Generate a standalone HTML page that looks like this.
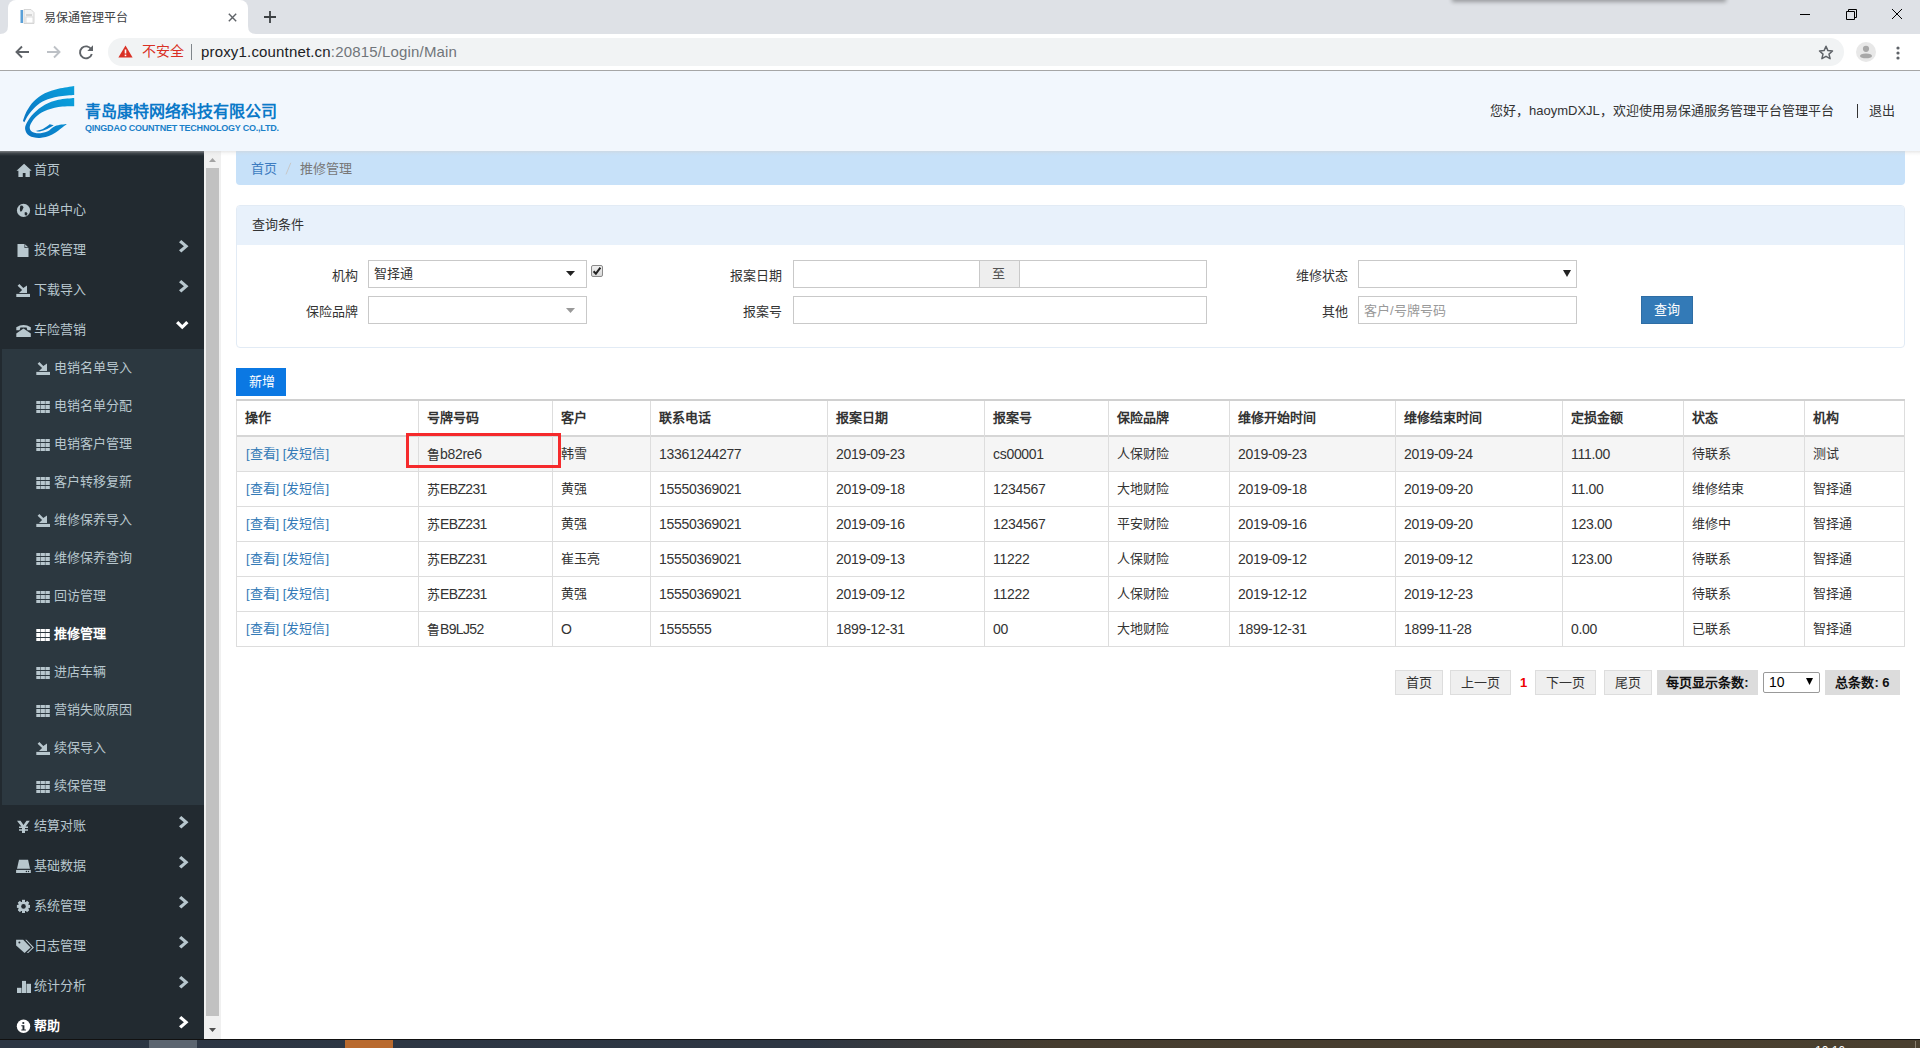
<!DOCTYPE html><html lang="zh-CN"><head><meta charset="utf-8"><title>易保通管理平台</title><style>
*{box-sizing:border-box;margin:0;padding:0}
html,body{width:1920px;height:1048px;overflow:hidden;background:#fff;font-family:"Liberation Sans",sans-serif;position:relative;color:#333}
.a{position:absolute;white-space:nowrap}
.t{position:absolute;white-space:nowrap;line-height:1}
svg{position:absolute;overflow:visible}
</style></head><body>
<div class="a" style="left:0px;top:0px;width:1920px;height:34px;background:#dee1e6"></div>
<div class="a" style="left:1453px;top:-10px;width:272px;height:10px;background:#888;box-shadow:0 1px 4px 1px rgba(0,0,0,0.32)"></div>
<div class="a" style="left:8px;top:0px;width:240px;height:34px;background:#fff;border-radius:8px 8px 0 0"></div>
<svg style="left:0;top:26px" width="8" height="8"><path d="M0 8 Q8 8 8 0 L8 8Z" fill="#fff"/></svg>
<svg style="left:248px;top:26px" width="8" height="8"><path d="M8 8 Q0 8 0 0 L0 8Z" fill="#fff"/></svg>
<svg style="left:20px;top:9px" width="16" height="16"><rect x="0.5" y="1" width="2.5" height="13" fill="#5aa0d8"/><path d="M4 0.5h7l3 3v11H4z" fill="#f4f4f4" stroke="#ccc" stroke-width="0.8"/><rect x="6" y="8" width="7" height="6" fill="#fff" stroke="#d6d6d6" stroke-width="0.8"/><line x1="6" y1="6" x2="12" y2="6" stroke="#aaa" stroke-width="0.8"/></svg>
<div class="t" style="left:44px;top:12px;font-size:12px;color:#3c4043;">易保通管理平台</div>
<svg style="left:228px;top:13px" width="9" height="9"><path d="M0.8 0.8L8.2 8.2M8.2 0.8L0.8 8.2" stroke="#5f6368" stroke-width="1.4"/></svg>
<svg style="left:264px;top:11px" width="12" height="12"><path d="M6 0v12M0 6h12" stroke="#3c4043" stroke-width="1.8"/></svg>
<div class="a" style="left:1800px;top:14px;width:10px;height:1px;background:#000"></div>
<svg style="left:1846px;top:9px" width="11" height="11"><path d="M0.5 2.5h8v8h-8z M2.5 2.5V0.5h8v8h-2" fill="none" stroke="#000" stroke-width="1"/></svg>
<svg style="left:1892px;top:9px" width="10" height="10"><path d="M0 0L10 10M10 0L0 10" stroke="#000" stroke-width="1"/></svg>
<div class="a" style="left:0px;top:34px;width:1920px;height:36px;background:#fff"></div>
<div class="a" style="left:0px;top:70px;width:1920px;height:1px;background:#a6a6a6"></div>
<svg style="left:15px;top:45px" width="14" height="14"><path d="M14 7H2M7 1.5L1.5 7 7 12.5" fill="none" stroke="#5f6368" stroke-width="1.9"/></svg>
<svg style="left:47px;top:45px" width="14" height="14"><path d="M0 7h12M7 1.5L12.5 7 7 12.5" fill="none" stroke="#bdc1c6" stroke-width="1.9"/></svg>
<svg style="left:79px;top:45px" width="14" height="14"><path d="M12.3 4.5A6 6 0 1 0 12.8 9" fill="none" stroke="#5f6368" stroke-width="1.9"/><path d="M14 0.3V6H8.3z" fill="#5f6368"/></svg>
<div class="a" style="left:108px;top:38px;width:1736px;height:28px;background:#f1f3f4;border-radius:14px"></div>
<svg style="left:118px;top:45px" width="15" height="13"><path d="M7.5 0.5L14.6 12.6H0.4z" fill="#d93025"/><rect x="6.7" y="4.5" width="1.6" height="4" fill="#fff"/><rect x="6.7" y="9.6" width="1.6" height="1.6" fill="#fff"/></svg>
<div class="t" style="left:142px;top:44px;font-size:14px;color:#d93025;">不安全</div>
<div class="a" style="left:191px;top:44px;width:1px;height:16px;background:#80868b"></div>
<div class="t" style="left:201px;top:44px;font-size:15px;color:#202124;letter-spacing:0.17px">proxy1.countnet.cn<span style="color:#70757a">:20815/Login/Main</span></div>
<svg style="left:1818px;top:45px" width="16" height="15"><path d="M8 1.3l1.9 4.3 4.6 0.4-3.5 3.1 1.1 4.6L8 11.3l-4.1 2.4 1.1-4.6L1.5 6l4.6-0.4z" fill="none" stroke="#5f6368" stroke-width="1.5" stroke-linejoin="round"/></svg>
<svg style="left:1856px;top:42px" width="20" height="20"><circle cx="10" cy="10" r="10" fill="#e8e8e8"/><circle cx="10" cy="6.8" r="3.1" fill="#a8a8a8"/><path d="M4 14.2Q4 11.5 10 11.5T16 14.2Q15 16.2 10 16.2T4 14.2z" fill="#a8a8a8"/></svg>
<svg style="left:1896px;top:45.6px" width="4" height="4"><circle cx="2" cy="2" r="1.6" fill="#5f6368"/></svg>
<svg style="left:1896px;top:50.6px" width="4" height="4"><circle cx="2" cy="2" r="1.6" fill="#5f6368"/></svg>
<svg style="left:1896px;top:55.6px" width="4" height="4"><circle cx="2" cy="2" r="1.6" fill="#5f6368"/></svg>
<div class="a" style="left:0px;top:71px;width:1920px;height:80px;background:#f2f7fd"></div>
<svg style="left:15px;top:80px" width="70" height="65" viewBox="15 80 70 65">
<defs><linearGradient id="lg" x1="0" y1="1" x2="1" y2="0"><stop offset="0" stop-color="#0a74c2"/><stop offset="1" stop-color="#0aa0dc"/></linearGradient></defs>
<path d="M74.2 85.9C71.6 86.4 63.3 87.5 58.4 88.7C53.5 89.9 48.9 91.2 44.8 93.3C40.7 95.4 36.6 98.5 33.6 101.4C30.6 104.4 28.6 107.8 26.8 111.0C25.0 114.2 23.6 119.2 23.0 120.9L24.3 122.2C25.0 121.0 26.7 117.3 28.6 114.7C30.5 112.1 32.8 109.1 35.5 106.7C38.2 104.3 41.0 102.2 44.8 100.5C48.6 98.8 53.5 97.3 58.4 96.4C63.3 95.5 71.6 95.2 74.2 94.9Z" fill="url(#lg)"/>
<path d="M74.2 98.0C71.6 98.3 63.3 98.7 58.4 99.8C53.5 100.9 48.9 102.5 44.8 104.8C40.7 107.1 36.6 110.5 33.6 113.5C30.6 116.5 28.2 120.1 26.8 122.8C25.4 125.5 24.8 127.4 25.2 129.6C25.6 131.8 26.9 134.4 29.3 135.8C31.7 137.2 36.0 138.2 39.8 138.0C43.6 137.8 47.7 136.9 52.2 134.6C56.7 132.3 64.4 125.8 66.8 124.0L66.8 124.0C64.9 124.3 58.6 124.7 55.3 125.9C52.0 127.2 50.0 130.3 47.2 131.5C44.4 132.7 41.2 133.3 38.6 133.3C36.0 133.3 33.1 132.7 31.7 131.5C30.2 130.3 29.3 128.3 29.9 125.9C30.5 123.5 33.0 119.7 35.5 117.2C38.0 114.7 41.0 112.7 44.8 111.0C48.6 109.3 53.5 107.8 58.4 107.0C63.3 106.2 71.6 106.4 74.2 106.3Z" fill="url(#lg)"/>
<path d="M35.5 131.1C36.7 130.8 40.5 130.1 42.9 129.0C45.3 127.9 48.6 125.1 49.7 124.3L53.7 125.3L53.7 125.3C52.6 125.9 49.5 128.0 47.2 129.0C44.9 130.0 41.8 131.2 39.8 131.5C37.8 131.8 36.2 131.2 35.5 131.1Z" fill="#0a7fc8"/>
</svg>
<div class="t" style="left:85px;top:104px;font-size:16px;color:#0b79c8;font-weight:bold">青岛康特网络科技有限公司</div>
<div class="t" style="left:85px;top:124px;font-size:9px;color:#1a80c8;font-weight:bold;letter-spacing:-0.22px">QINGDAO COUNTNET TECHNOLOGY CO.,LTD.</div>
<div class="t" style="left:1490px;top:104px;font-size:13px;color:#333;">您好，haoymDXJL，欢迎使用易保通服务管理平台管理平台</div>
<div class="a" style="left:1857px;top:104px;width:1px;height:14px;background:#333"></div>
<div class="t" style="left:1869px;top:104px;font-size:13px;color:#333;">退出</div>
<div class="a" style="left:0px;top:151px;width:204px;height:888px;background:#222a30"></div>
<div class="a" style="left:2px;top:349px;width:202px;height:456px;background:#2c3840"></div>
<div class="a" style="left:204px;top:151px;width:17px;height:888px;background:#f0f0f0"></div>
<div class="a" style="left:206px;top:168px;width:13px;height:848px;background:#c1c1c1"></div>
<svg style="left:209px;top:158px" width="7" height="4"><path d="M0 4L3.5 0 7 4z" fill="#a3a3a3"/></svg>
<svg style="left:209px;top:1028px" width="7" height="4"><path d="M0 0L3.5 4 7 0z" fill="#505050"/></svg>
<svg style="left:0;top:0" width="1" height="1"><g transform="translate(0,0)"><path d="M16.5 170.7L24.1 163.8 31.7 170.7H29.8V177H25.5V173H22.8V177H18.4V170.7z" fill="#b8c7ce"/></g></svg>
<div class="t" style="left:34px;top:163px;font-size:13px;color:#b8c7ce;">首页</div>
<svg style="left:0;top:0" width="1" height="1"><g transform="translate(0,0)"><circle cx="23.5" cy="210.4" r="6.6" fill="#b8c7ce"/><path d="M20.3 205.8L22.2 205.6 23.6 207.2 22.6 209.6 21.8 211.2 20.2 211.6 19.8 209 z" fill="#222a30"/><path d="M24.6 212.5L26.2 212 27.6 213.8 26.4 215.8 24.8 215 z" fill="#222a30"/></g></svg>
<div class="t" style="left:34px;top:203px;font-size:13px;color:#b8c7ce;">出单中心</div>
<svg style="left:0;top:0" width="1" height="1"><g transform="translate(0,0)"><path d="M17.5 244H24.5L28.5 248V257.1H17.5z" fill="#b8c7ce"/><path d="M24.5 244V248H28.5z" fill="#222a30"/><path d="M25.2 244.4V247.3H28.1z" fill="#b8c7ce"/></g></svg>
<div class="t" style="left:34px;top:243px;font-size:13px;color:#b8c7ce;">投保管理</div>
<svg style="left:178.7px;top:239.7px" width="10" height="13"><path d="M0 2.3L2.3 0 9.5 6.25 2.3 12.5 0 10.2 4.9 6.25z" fill="#b8c7ce"/></svg>
<svg style="left:0;top:0" width="1" height="1"><g transform="translate(0,0)"><rect x="16.3" y="293.9" width="13.7" height="3.1" fill="#b8c7ce"/><path d="M17.6 285.8L19.4 284 23.3 287.9 27 285.4V293H19L22.1 289.9z" fill="#b8c7ce"/></g></svg>
<div class="t" style="left:34px;top:283px;font-size:13px;color:#b8c7ce;">下载导入</div>
<svg style="left:178.7px;top:279.7px" width="10" height="13"><path d="M0 2.3L2.3 0 9.5 6.25 2.3 12.5 0 10.2 4.9 6.25z" fill="#b8c7ce"/></svg>
<svg style="left:0;top:0" width="1" height="1"><g transform="translate(0,0)"><path d="M16.3 327.3Q23.5 322.6 30.8 327.3V330.2H27.4L26.6 327.6H20.4L19.6 330.2H16.3z" fill="#b8c7ce"/><path d="M23.5 328.4L30.8 333.4V337H16.3V333.4z" fill="#b8c7ce"/></g></svg>
<div class="t" style="left:34px;top:323px;font-size:13px;color:#b8c7ce;">车险营销</div>
<svg style="left:176px;top:321px" width="13" height="9"><path d="M0 2.3L2.3 0 6.25 3.9 10.2 0 12.5 2.3 6.25 8.2z" fill="#fff"/></svg>
<svg style="left:0;top:0" width="1" height="1"><g transform="translate(0,0)"><path d="M17 820.8H20.5L23.5 825L26.5 820.8H29.8L25.6 826.6H28V828H25V829.3H28V830.8H25V833H22V830.8H19V829.3H22V828H19V826.6H21.4z" fill="#b8c7ce"/></g></svg>
<div class="t" style="left:34px;top:819px;font-size:13px;color:#b8c7ce;">结算对账</div>
<svg style="left:178.7px;top:815.7px" width="10" height="13"><path d="M0 2.3L2.3 0 9.5 6.25 2.3 12.5 0 10.2 4.9 6.25z" fill="#b8c7ce"/></svg>
<svg style="left:0;top:0" width="1" height="1"><g transform="translate(0,0)"><path d="M19 859.8H28.1L30 868.8H17z" fill="#b8c7ce"/><rect x="16.1" y="869.9" width="14.7" height="3.1" fill="#b8c7ce"/><circle cx="26.4" cy="871.5" r="0.7" fill="#222a30"/><circle cx="28.5" cy="871.5" r="0.7" fill="#222a30"/></g></svg>
<div class="t" style="left:34px;top:859px;font-size:13px;color:#b8c7ce;">基础数据</div>
<svg style="left:178.7px;top:855.7px" width="10" height="13"><path d="M0 2.3L2.3 0 9.5 6.25 2.3 12.5 0 10.2 4.9 6.25z" fill="#b8c7ce"/></svg>
<svg style="left:0;top:0" width="1" height="1"><g transform="translate(0,0)"><g fill="#b8c7ce"><rect x="18.5" y="902" width="10" height="9"/><rect x="22" y="899.8" width="3" height="13.2"/><rect x="16.9" y="904.9" width="13.1" height="3"/><rect x="22" y="899.8" width="3" height="13.2" transform="rotate(45 23.5 906.4)"/><rect x="22" y="899.8" width="3" height="13.2" transform="rotate(-45 23.5 906.4)"/></g><circle cx="23.5" cy="906.4" r="2.3" fill="#222a30"/></g></svg>
<div class="t" style="left:34px;top:899px;font-size:13px;color:#b8c7ce;">系统管理</div>
<svg style="left:178.7px;top:895.7px" width="10" height="13"><path d="M0 2.3L2.3 0 9.5 6.25 2.3 12.5 0 10.2 4.9 6.25z" fill="#b8c7ce"/></svg>
<svg style="left:0;top:0" width="1" height="1"><g transform="translate(0,0)"><path d="M16.1 939.8H23.2L30.6 947.4 24.6 953 16.1 945.6z" fill="#b8c7ce"/><circle cx="19.4" cy="942.5" r="1" fill="#222a30"/><path d="M25.2 939.8H26.6L34 947.4 28.2 953H26.8L32.4 947.4z" fill="#b8c7ce"/></g></svg>
<div class="t" style="left:34px;top:939px;font-size:13px;color:#b8c7ce;">日志管理</div>
<svg style="left:178.7px;top:935.7px" width="10" height="13"><path d="M0 2.3L2.3 0 9.5 6.25 2.3 12.5 0 10.2 4.9 6.25z" fill="#b8c7ce"/></svg>
<svg style="left:0;top:0" width="1" height="1"><g transform="translate(0,0)"><rect x="17" y="987.8" width="4.5" height="5.2" fill="#b8c7ce"/><rect x="22" y="980.9" width="4" height="12.1" fill="#b8c7ce"/><rect x="26.5" y="983.8" width="4.5" height="9.2" fill="#b8c7ce"/></g></svg>
<div class="t" style="left:34px;top:979px;font-size:13px;color:#b8c7ce;">统计分析</div>
<svg style="left:178.7px;top:975.7px" width="10" height="13"><path d="M0 2.3L2.3 0 9.5 6.25 2.3 12.5 0 10.2 4.9 6.25z" fill="#b8c7ce"/></svg>
<svg style="left:0;top:0" width="1" height="1"><g transform="translate(0,0)"><circle cx="23.5" cy="1026.3" r="6.7" fill="#fff"/><circle cx="23.3" cy="1023" r="1.1" fill="#222a30"/><path d="M21.3 1025.3H24.4V1029.4H25.9V1030.4H21.3V1029.4H22.5V1026.3H21.3z" fill="#222a30"/></g></svg>
<div class="t" style="left:34px;top:1019px;font-size:13px;color:#fff;font-weight:bold">帮助</div>
<svg style="left:178.7px;top:1015.7px" width="10" height="13"><path d="M0 2.3L2.3 0 9.5 6.25 2.3 12.5 0 10.2 4.9 6.25z" fill="#fff"/></svg>
<svg style="left:0;top:0" width="1" height="1"><g transform="translate(20,78)"><rect x="16.3" y="293.9" width="13.7" height="3.1" fill="#b8c7ce"/><path d="M17.6 285.8L19.4 284 23.3 287.9 27 285.4V293H19L22.1 289.9z" fill="#b8c7ce"/></g></svg>
<div class="t" style="left:54px;top:361px;font-size:13px;color:#b8c7ce;">电销名单导入</div>
<svg style="left:0;top:0" width="1" height="1"><g transform="translate(0,0)"><path d="M36.3 400.9h4.1v3.1h-4.1zM40.9 400.9h4v3.1h-4zM45.4 400.9h4.4v3.1h-4.4zM36.3 405h4.1v4h-4.1zM40.9 405h4v4h-4zM45.4 405h4.4v4h-4.4zM36.3 409.9h4.1v3.1h-4.1zM40.9 409.9h4v3.1h-4zM45.4 409.9h4.4v3.1h-4.4z" fill="#b8c7ce"/></g></svg>
<div class="t" style="left:54px;top:399px;font-size:13px;color:#b8c7ce;">电销名单分配</div>
<svg style="left:0;top:0" width="1" height="1"><g transform="translate(0,38)"><path d="M36.3 400.9h4.1v3.1h-4.1zM40.9 400.9h4v3.1h-4zM45.4 400.9h4.4v3.1h-4.4zM36.3 405h4.1v4h-4.1zM40.9 405h4v4h-4zM45.4 405h4.4v4h-4.4zM36.3 409.9h4.1v3.1h-4.1zM40.9 409.9h4v3.1h-4zM45.4 409.9h4.4v3.1h-4.4z" fill="#b8c7ce"/></g></svg>
<div class="t" style="left:54px;top:437px;font-size:13px;color:#b8c7ce;">电销客户管理</div>
<svg style="left:0;top:0" width="1" height="1"><g transform="translate(0,76)"><path d="M36.3 400.9h4.1v3.1h-4.1zM40.9 400.9h4v3.1h-4zM45.4 400.9h4.4v3.1h-4.4zM36.3 405h4.1v4h-4.1zM40.9 405h4v4h-4zM45.4 405h4.4v4h-4.4zM36.3 409.9h4.1v3.1h-4.1zM40.9 409.9h4v3.1h-4zM45.4 409.9h4.4v3.1h-4.4z" fill="#b8c7ce"/></g></svg>
<div class="t" style="left:54px;top:475px;font-size:13px;color:#b8c7ce;">客户转移复新</div>
<svg style="left:0;top:0" width="1" height="1"><g transform="translate(20,230)"><rect x="16.3" y="293.9" width="13.7" height="3.1" fill="#b8c7ce"/><path d="M17.6 285.8L19.4 284 23.3 287.9 27 285.4V293H19L22.1 289.9z" fill="#b8c7ce"/></g></svg>
<div class="t" style="left:54px;top:513px;font-size:13px;color:#b8c7ce;">维修保养导入</div>
<svg style="left:0;top:0" width="1" height="1"><g transform="translate(0,152)"><path d="M36.3 400.9h4.1v3.1h-4.1zM40.9 400.9h4v3.1h-4zM45.4 400.9h4.4v3.1h-4.4zM36.3 405h4.1v4h-4.1zM40.9 405h4v4h-4zM45.4 405h4.4v4h-4.4zM36.3 409.9h4.1v3.1h-4.1zM40.9 409.9h4v3.1h-4zM45.4 409.9h4.4v3.1h-4.4z" fill="#b8c7ce"/></g></svg>
<div class="t" style="left:54px;top:551px;font-size:13px;color:#b8c7ce;">维修保养查询</div>
<svg style="left:0;top:0" width="1" height="1"><g transform="translate(0,190)"><path d="M36.3 400.9h4.1v3.1h-4.1zM40.9 400.9h4v3.1h-4zM45.4 400.9h4.4v3.1h-4.4zM36.3 405h4.1v4h-4.1zM40.9 405h4v4h-4zM45.4 405h4.4v4h-4.4zM36.3 409.9h4.1v3.1h-4.1zM40.9 409.9h4v3.1h-4zM45.4 409.9h4.4v3.1h-4.4z" fill="#b8c7ce"/></g></svg>
<div class="t" style="left:54px;top:589px;font-size:13px;color:#b8c7ce;">回访管理</div>
<svg style="left:0;top:0" width="1" height="1"><g transform="translate(0,228)"><path d="M36.3 400.9h4.1v3.1h-4.1zM40.9 400.9h4v3.1h-4zM45.4 400.9h4.4v3.1h-4.4zM36.3 405h4.1v4h-4.1zM40.9 405h4v4h-4zM45.4 405h4.4v4h-4.4zM36.3 409.9h4.1v3.1h-4.1zM40.9 409.9h4v3.1h-4zM45.4 409.9h4.4v3.1h-4.4z" fill="#fff"/></g></svg>
<div class="t" style="left:54px;top:627px;font-size:13px;color:#fff;font-weight:bold">推修管理</div>
<svg style="left:0;top:0" width="1" height="1"><g transform="translate(0,266)"><path d="M36.3 400.9h4.1v3.1h-4.1zM40.9 400.9h4v3.1h-4zM45.4 400.9h4.4v3.1h-4.4zM36.3 405h4.1v4h-4.1zM40.9 405h4v4h-4zM45.4 405h4.4v4h-4.4zM36.3 409.9h4.1v3.1h-4.1zM40.9 409.9h4v3.1h-4zM45.4 409.9h4.4v3.1h-4.4z" fill="#b8c7ce"/></g></svg>
<div class="t" style="left:54px;top:665px;font-size:13px;color:#b8c7ce;">进店车辆</div>
<svg style="left:0;top:0" width="1" height="1"><g transform="translate(0,304)"><path d="M36.3 400.9h4.1v3.1h-4.1zM40.9 400.9h4v3.1h-4zM45.4 400.9h4.4v3.1h-4.4zM36.3 405h4.1v4h-4.1zM40.9 405h4v4h-4zM45.4 405h4.4v4h-4.4zM36.3 409.9h4.1v3.1h-4.1zM40.9 409.9h4v3.1h-4zM45.4 409.9h4.4v3.1h-4.4z" fill="#b8c7ce"/></g></svg>
<div class="t" style="left:54px;top:703px;font-size:13px;color:#b8c7ce;">营销失败原因</div>
<svg style="left:0;top:0" width="1" height="1"><g transform="translate(20,458)"><rect x="16.3" y="293.9" width="13.7" height="3.1" fill="#b8c7ce"/><path d="M17.6 285.8L19.4 284 23.3 287.9 27 285.4V293H19L22.1 289.9z" fill="#b8c7ce"/></g></svg>
<div class="t" style="left:54px;top:741px;font-size:13px;color:#b8c7ce;">续保导入</div>
<svg style="left:0;top:0" width="1" height="1"><g transform="translate(0,380)"><path d="M36.3 400.9h4.1v3.1h-4.1zM40.9 400.9h4v3.1h-4zM45.4 400.9h4.4v3.1h-4.4zM36.3 405h4.1v4h-4.1zM40.9 405h4v4h-4zM45.4 405h4.4v4h-4.4zM36.3 409.9h4.1v3.1h-4.1zM40.9 409.9h4v3.1h-4zM45.4 409.9h4.4v3.1h-4.4z" fill="#b8c7ce"/></g></svg>
<div class="t" style="left:54px;top:779px;font-size:13px;color:#b8c7ce;">续保管理</div>
<div class="a" style="left:236px;top:151px;width:1669px;height:34px;background:#c7e1f9;border-radius:0 0 4px 4px"></div>
<div class="t" style="left:251px;top:162px;font-size:13px;color:#3d7cc0;">首页</div>
<svg style="left:285px;top:162px" width="7" height="13"><path d="M5.8 0.8L1 12.4" stroke="#c8c8c8" stroke-width="1"/></svg>
<div class="t" style="left:300px;top:162px;font-size:13px;color:#777;">推修管理</div>
<div class="a" style="left:236px;top:205px;width:1669px;height:143px;background:#fff;border:1px solid #e2ebf5;border-radius:4px"></div>
<div class="a" style="left:237px;top:206px;width:1667px;height:39px;background:#e8f1fb;border-radius:3px 3px 0 0"></div>
<div class="t" style="left:252px;top:218px;font-size:13px;color:#333;">查询条件</div>
<div class="t" style="right:1562px;top:269px;font-size:13px;color:#333">机构</div>
<div class="t" style="right:1562px;top:305px;font-size:13px;color:#333">保险品牌</div>
<div class="t" style="right:1138px;top:269px;font-size:13px;color:#333">报案日期</div>
<div class="t" style="right:1138px;top:305px;font-size:13px;color:#333">报案号</div>
<div class="t" style="right:572px;top:269px;font-size:13px;color:#333">维修状态</div>
<div class="t" style="right:572px;top:305px;font-size:13px;color:#333">其他</div>
<div class="a" style="left:368px;top:260px;width:219px;height:28px;background:#fff;border:1px solid #c9c9c9;"></div>
<div class="t" style="left:374px;top:267px;font-size:13px;color:#333;">智择通</div>
<svg style="left:566px;top:271px" width="9" height="5"><path d="M0 0H9L4.5 5z" fill="#222"/></svg>
<div class="a" style="left:591px;top:265px;width:12px;height:12px;background:linear-gradient(#f0f0f0,#d8d8d8);border:1px solid #8a8a8a;border-radius:2px"></div>
<svg style="left:592px;top:266px" width="10" height="10"><path d="M1.6 5.2L3.9 7.6 8.4 1.6" fill="none" stroke="#222" stroke-width="2"/></svg>
<div class="a" style="left:368px;top:296px;width:219px;height:28px;background:#fff;border:1px solid #c9c9c9;"></div>
<svg style="left:566px;top:308px" width="9" height="5"><path d="M0 0H9L4.5 5z" fill="#999"/></svg>
<div class="a" style="left:793px;top:260px;width:187px;height:28px;background:#fff;border:1px solid #c9c9c9;"></div>
<div class="a" style="left:979px;top:260px;width:41px;height:28px;background:#eee;border:1px solid #c9c9c9"></div>
<div class="t" style="left:992px;top:267px;font-size:13px;color:#555;">至</div>
<div class="a" style="left:1019px;top:260px;width:188px;height:28px;background:#fff;border:1px solid #c9c9c9;"></div>
<div class="a" style="left:793px;top:296px;width:414px;height:28px;background:#fff;border:1px solid #c9c9c9;"></div>
<div class="a" style="left:1358px;top:260px;width:219px;height:28px;background:#fff;border:1px solid #c9c9c9;"></div>
<svg style="left:1563px;top:270px" width="8" height="7"><path d="M0 0H8L4 7z" fill="#222"/></svg>
<div class="a" style="left:1358px;top:296px;width:219px;height:28px;background:#fff;border:1px solid #c9c9c9;"></div>
<div class="t" style="left:1364px;top:304px;font-size:13px;color:#999;">客户/号牌号码</div>
<div class="a" style="left:1641px;top:296px;width:52px;height:28px;background:#337ab7;border:1px solid #2e6da4"></div>
<div class="t" style="left:1654px;top:303px;font-size:13px;color:#fff;">查询</div>
<div class="a" style="left:236px;top:368px;width:50px;height:28px;background:#0b78e3"></div>
<div class="t" style="left:249px;top:375px;font-size:13px;color:#fff;">新增</div>
<div class="a" style="left:236px;top:399px;width:1669px;height:2px;background:#d0d0d0"></div>
<div class="a" style="left:236px;top:435px;width:1669px;height:2px;background:#d6d6d6"></div>
<div class="a" style="left:237px;top:437px;width:1667px;height:34px;background:#f5f5f5"></div>
<div class="a" style="left:236px;top:471px;width:1669px;height:1px;background:#ddd"></div>
<div class="a" style="left:236px;top:506px;width:1669px;height:1px;background:#ddd"></div>
<div class="a" style="left:236px;top:541px;width:1669px;height:1px;background:#ddd"></div>
<div class="a" style="left:236px;top:576px;width:1669px;height:1px;background:#ddd"></div>
<div class="a" style="left:236px;top:611px;width:1669px;height:1px;background:#ddd"></div>
<div class="a" style="left:236px;top:646px;width:1669px;height:1px;background:#ddd"></div>
<div class="a" style="left:236px;top:401px;width:1px;height:245px;background:#ddd"></div>
<div class="a" style="left:418px;top:401px;width:1px;height:245px;background:#ddd"></div>
<div class="a" style="left:552px;top:401px;width:1px;height:245px;background:#ddd"></div>
<div class="a" style="left:650px;top:401px;width:1px;height:245px;background:#ddd"></div>
<div class="a" style="left:827px;top:401px;width:1px;height:245px;background:#ddd"></div>
<div class="a" style="left:984px;top:401px;width:1px;height:245px;background:#ddd"></div>
<div class="a" style="left:1108px;top:401px;width:1px;height:245px;background:#ddd"></div>
<div class="a" style="left:1229px;top:401px;width:1px;height:245px;background:#ddd"></div>
<div class="a" style="left:1395px;top:401px;width:1px;height:245px;background:#ddd"></div>
<div class="a" style="left:1562px;top:401px;width:1px;height:245px;background:#ddd"></div>
<div class="a" style="left:1683px;top:401px;width:1px;height:245px;background:#ddd"></div>
<div class="a" style="left:1804px;top:401px;width:1px;height:245px;background:#ddd"></div>
<div class="a" style="left:1904px;top:401px;width:1px;height:245px;background:#ddd"></div>
<div class="t" style="left:245px;top:411px;font-size:13px;color:#333;font-weight:bold">操作</div>
<div class="t" style="left:427px;top:411px;font-size:13px;color:#333;font-weight:bold">号牌号码</div>
<div class="t" style="left:561px;top:411px;font-size:13px;color:#333;font-weight:bold">客户</div>
<div class="t" style="left:659px;top:411px;font-size:13px;color:#333;font-weight:bold">联系电话</div>
<div class="t" style="left:836px;top:411px;font-size:13px;color:#333;font-weight:bold">报案日期</div>
<div class="t" style="left:993px;top:411px;font-size:13px;color:#333;font-weight:bold">报案号</div>
<div class="t" style="left:1117px;top:411px;font-size:13px;color:#333;font-weight:bold">保险品牌</div>
<div class="t" style="left:1238px;top:411px;font-size:13px;color:#333;font-weight:bold">维修开始时间</div>
<div class="t" style="left:1404px;top:411px;font-size:13px;color:#333;font-weight:bold">维修结束时间</div>
<div class="t" style="left:1571px;top:411px;font-size:13px;color:#333;font-weight:bold">定损金额</div>
<div class="t" style="left:1692px;top:411px;font-size:13px;color:#333;font-weight:bold">状态</div>
<div class="t" style="left:1813px;top:411px;font-size:13px;color:#333;font-weight:bold">机构</div>
<div class="t" style="left:246px;top:447px;font-size:13px;color:#337ab7;">[查看] [发短信]</div>
<div class="t" style="left:427px;top:447px;font-size:13px;color:#333;">鲁<span style="font-size:14px;letter-spacing:-0.3px">b82re6</span></div>
<div class="t" style="left:561px;top:447px;font-size:13px;color:#333;">韩雪</div>
<div class="t" style="left:659px;top:447px;font-size:13px;color:#333;"><span style="font-size:14px;letter-spacing:-0.3px">13361244277</span></div>
<div class="t" style="left:836px;top:447px;font-size:13px;color:#333;"><span style="font-size:14px;letter-spacing:-0.3px">2019-09-23</span></div>
<div class="t" style="left:993px;top:447px;font-size:13px;color:#333;"><span style="font-size:14px;letter-spacing:-0.3px">cs00001</span></div>
<div class="t" style="left:1117px;top:447px;font-size:13px;color:#333;">人保财险</div>
<div class="t" style="left:1238px;top:447px;font-size:13px;color:#333;"><span style="font-size:14px;letter-spacing:-0.3px">2019-09-23</span></div>
<div class="t" style="left:1404px;top:447px;font-size:13px;color:#333;"><span style="font-size:14px;letter-spacing:-0.3px">2019-09-24</span></div>
<div class="t" style="left:1571px;top:447px;font-size:13px;color:#333;"><span style="font-size:14px;letter-spacing:-0.3px">111.00</span></div>
<div class="t" style="left:1692px;top:447px;font-size:13px;color:#333;">待联系</div>
<div class="t" style="left:1813px;top:447px;font-size:13px;color:#333;">测试</div>
<div class="t" style="left:246px;top:482px;font-size:13px;color:#337ab7;">[查看] [发短信]</div>
<div class="t" style="left:427px;top:482px;font-size:13px;color:#333;">苏<span style="font-size:14px;letter-spacing:-0.65px">EBZ231</span></div>
<div class="t" style="left:561px;top:482px;font-size:13px;color:#333;">黄强</div>
<div class="t" style="left:659px;top:482px;font-size:13px;color:#333;"><span style="font-size:14px;letter-spacing:-0.3px">15550369021</span></div>
<div class="t" style="left:836px;top:482px;font-size:13px;color:#333;"><span style="font-size:14px;letter-spacing:-0.3px">2019-09-18</span></div>
<div class="t" style="left:993px;top:482px;font-size:13px;color:#333;"><span style="font-size:14px;letter-spacing:-0.3px">1234567</span></div>
<div class="t" style="left:1117px;top:482px;font-size:13px;color:#333;">大地财险</div>
<div class="t" style="left:1238px;top:482px;font-size:13px;color:#333;"><span style="font-size:14px;letter-spacing:-0.3px">2019-09-18</span></div>
<div class="t" style="left:1404px;top:482px;font-size:13px;color:#333;"><span style="font-size:14px;letter-spacing:-0.3px">2019-09-20</span></div>
<div class="t" style="left:1571px;top:482px;font-size:13px;color:#333;"><span style="font-size:14px;letter-spacing:-0.3px">11.00</span></div>
<div class="t" style="left:1692px;top:482px;font-size:13px;color:#333;">维修结束</div>
<div class="t" style="left:1813px;top:482px;font-size:13px;color:#333;">智择通</div>
<div class="t" style="left:246px;top:517px;font-size:13px;color:#337ab7;">[查看] [发短信]</div>
<div class="t" style="left:427px;top:517px;font-size:13px;color:#333;">苏<span style="font-size:14px;letter-spacing:-0.65px">EBZ231</span></div>
<div class="t" style="left:561px;top:517px;font-size:13px;color:#333;">黄强</div>
<div class="t" style="left:659px;top:517px;font-size:13px;color:#333;"><span style="font-size:14px;letter-spacing:-0.3px">15550369021</span></div>
<div class="t" style="left:836px;top:517px;font-size:13px;color:#333;"><span style="font-size:14px;letter-spacing:-0.3px">2019-09-16</span></div>
<div class="t" style="left:993px;top:517px;font-size:13px;color:#333;"><span style="font-size:14px;letter-spacing:-0.3px">1234567</span></div>
<div class="t" style="left:1117px;top:517px;font-size:13px;color:#333;">平安财险</div>
<div class="t" style="left:1238px;top:517px;font-size:13px;color:#333;"><span style="font-size:14px;letter-spacing:-0.3px">2019-09-16</span></div>
<div class="t" style="left:1404px;top:517px;font-size:13px;color:#333;"><span style="font-size:14px;letter-spacing:-0.3px">2019-09-20</span></div>
<div class="t" style="left:1571px;top:517px;font-size:13px;color:#333;"><span style="font-size:14px;letter-spacing:-0.3px">123.00</span></div>
<div class="t" style="left:1692px;top:517px;font-size:13px;color:#333;">维修中</div>
<div class="t" style="left:1813px;top:517px;font-size:13px;color:#333;">智择通</div>
<div class="t" style="left:246px;top:552px;font-size:13px;color:#337ab7;">[查看] [发短信]</div>
<div class="t" style="left:427px;top:552px;font-size:13px;color:#333;">苏<span style="font-size:14px;letter-spacing:-0.65px">EBZ231</span></div>
<div class="t" style="left:561px;top:552px;font-size:13px;color:#333;">崔玉亮</div>
<div class="t" style="left:659px;top:552px;font-size:13px;color:#333;"><span style="font-size:14px;letter-spacing:-0.3px">15550369021</span></div>
<div class="t" style="left:836px;top:552px;font-size:13px;color:#333;"><span style="font-size:14px;letter-spacing:-0.3px">2019-09-13</span></div>
<div class="t" style="left:993px;top:552px;font-size:13px;color:#333;"><span style="font-size:14px;letter-spacing:-0.3px">11222</span></div>
<div class="t" style="left:1117px;top:552px;font-size:13px;color:#333;">人保财险</div>
<div class="t" style="left:1238px;top:552px;font-size:13px;color:#333;"><span style="font-size:14px;letter-spacing:-0.3px">2019-09-12</span></div>
<div class="t" style="left:1404px;top:552px;font-size:13px;color:#333;"><span style="font-size:14px;letter-spacing:-0.3px">2019-09-12</span></div>
<div class="t" style="left:1571px;top:552px;font-size:13px;color:#333;"><span style="font-size:14px;letter-spacing:-0.3px">123.00</span></div>
<div class="t" style="left:1692px;top:552px;font-size:13px;color:#333;">待联系</div>
<div class="t" style="left:1813px;top:552px;font-size:13px;color:#333;">智择通</div>
<div class="t" style="left:246px;top:587px;font-size:13px;color:#337ab7;">[查看] [发短信]</div>
<div class="t" style="left:427px;top:587px;font-size:13px;color:#333;">苏<span style="font-size:14px;letter-spacing:-0.65px">EBZ231</span></div>
<div class="t" style="left:561px;top:587px;font-size:13px;color:#333;">黄强</div>
<div class="t" style="left:659px;top:587px;font-size:13px;color:#333;"><span style="font-size:14px;letter-spacing:-0.3px">15550369021</span></div>
<div class="t" style="left:836px;top:587px;font-size:13px;color:#333;"><span style="font-size:14px;letter-spacing:-0.3px">2019-09-12</span></div>
<div class="t" style="left:993px;top:587px;font-size:13px;color:#333;"><span style="font-size:14px;letter-spacing:-0.3px">11222</span></div>
<div class="t" style="left:1117px;top:587px;font-size:13px;color:#333;">人保财险</div>
<div class="t" style="left:1238px;top:587px;font-size:13px;color:#333;"><span style="font-size:14px;letter-spacing:-0.3px">2019-12-12</span></div>
<div class="t" style="left:1404px;top:587px;font-size:13px;color:#333;"><span style="font-size:14px;letter-spacing:-0.3px">2019-12-23</span></div>
<div class="t" style="left:1692px;top:587px;font-size:13px;color:#333;">待联系</div>
<div class="t" style="left:1813px;top:587px;font-size:13px;color:#333;">智择通</div>
<div class="t" style="left:246px;top:622px;font-size:13px;color:#337ab7;">[查看] [发短信]</div>
<div class="t" style="left:427px;top:622px;font-size:13px;color:#333;">鲁<span style="font-size:14px;letter-spacing:-0.65px">B9LJ52</span></div>
<div class="t" style="left:561px;top:622px;font-size:13px;color:#333;"><span style="font-size:14px;letter-spacing:-0.65px">O</span></div>
<div class="t" style="left:659px;top:622px;font-size:13px;color:#333;"><span style="font-size:14px;letter-spacing:-0.3px">1555555</span></div>
<div class="t" style="left:836px;top:622px;font-size:13px;color:#333;"><span style="font-size:14px;letter-spacing:-0.3px">1899-12-31</span></div>
<div class="t" style="left:993px;top:622px;font-size:13px;color:#333;"><span style="font-size:14px;letter-spacing:-0.3px">00</span></div>
<div class="t" style="left:1117px;top:622px;font-size:13px;color:#333;">大地财险</div>
<div class="t" style="left:1238px;top:622px;font-size:13px;color:#333;"><span style="font-size:14px;letter-spacing:-0.3px">1899-12-31</span></div>
<div class="t" style="left:1404px;top:622px;font-size:13px;color:#333;"><span style="font-size:14px;letter-spacing:-0.3px">1899-11-28</span></div>
<div class="t" style="left:1571px;top:622px;font-size:13px;color:#333;"><span style="font-size:14px;letter-spacing:-0.3px">0.00</span></div>
<div class="t" style="left:1692px;top:622px;font-size:13px;color:#333;">已联系</div>
<div class="t" style="left:1813px;top:622px;font-size:13px;color:#333;">智择通</div>
<div class="a" style="left:406px;top:433px;width:155px;height:35px;border:3px solid #f52a2c"></div>
<div class="a" style="left:1395px;top:670px;width:48px;height:25px;background:#efefef;border:1px solid #ddd"></div>
<div class="t" style="left:1395px;top:676px;width:48px;text-align:center;font-size:13px;color:#333;">首页</div>
<div class="a" style="left:1450px;top:670px;width:61px;height:25px;background:#efefef;border:1px solid #ddd"></div>
<div class="t" style="left:1450px;top:676px;width:61px;text-align:center;font-size:13px;color:#333;">上一页</div>
<div class="t" style="left:1520px;top:676px;font-size:13px;color:#e00;font-weight:bold">1</div>
<div class="a" style="left:1535px;top:670px;width:61px;height:25px;background:#efefef;border:1px solid #ddd"></div>
<div class="t" style="left:1535px;top:676px;width:61px;text-align:center;font-size:13px;color:#333;">下一页</div>
<div class="a" style="left:1604px;top:670px;width:48px;height:25px;background:#efefef;border:1px solid #ddd"></div>
<div class="t" style="left:1604px;top:676px;width:48px;text-align:center;font-size:13px;color:#333;">尾页</div>
<div class="a" style="left:1657px;top:670px;width:101px;height:25px;background:#dcdcdc;"></div>
<div class="t" style="left:1657px;top:676px;width:101px;text-align:center;font-size:13px;color:#111;font-weight:bold">每页显示条数:</div>
<div class="a" style="left:1763px;top:672px;width:57px;height:21px;background:#fff;border:1px solid #999;border-radius:2px"></div>
<div class="t" style="left:1769px;top:675px;font-size:14px;color:#000;">10</div>
<svg style="left:1806px;top:678px" width="7" height="7"><path d="M0 0H7L3.5 7z" fill="#000"/></svg>
<div class="a" style="left:1825px;top:670px;width:75px;height:25px;background:#dcdcdc;"></div>
<div class="t" style="left:1825px;top:676px;width:75px;text-align:center;font-size:13px;color:#111;font-weight:bold">总条数: 6</div>
<div class="a" style="left:0px;top:151px;width:1920px;height:5px;background:linear-gradient(rgba(210,210,210,0.5),rgba(210,210,210,0.15) 50%,rgba(210,210,210,0))"></div>
<div class="a" style="left:0px;top:1039px;width:1920px;height:9px;background:linear-gradient(90deg,#2c3644 0%,#2e3744 42%,#463d2f 55%,#4a402f 100%)"></div>
<div class="a" style="left:0px;top:1039px;width:1920px;height:1px;background:#111"></div>
<div class="a" style="left:149px;top:1040px;width:48px;height:8px;background:#5c6570"></div>
<div class="a" style="left:345px;top:1040px;width:48px;height:8px;background:#b96a2e"></div>
<div class="a" style="left:1915px;top:1041px;width:1px;height:7px;background:#8a8070"></div>
<div class="t" style="left:1815px;top:1045px;font-size:12px;color:#fff;">10:16</div>
</body></html>
